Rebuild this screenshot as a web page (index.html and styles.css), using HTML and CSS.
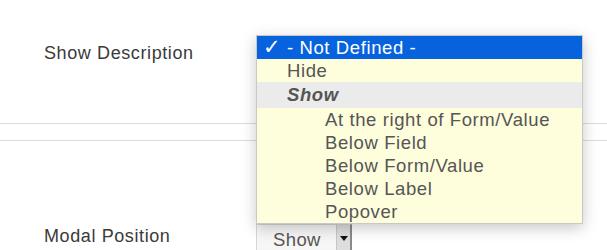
FILE: index.html
```html
<!DOCTYPE html>
<html lang="en">
<head>
  <meta charset="UTF-8">
  <title>Field Options</title>
  <link rel="stylesheet" href="styles.css">
</head>
<body>
  <div class="form">
    <div class="field first">
      <div class="label">Show Description</div>
      <div class="control">
        <ul class="menu">
          <li class="opt selected"><span class="check">✓</span>- Not Defined -</li>
          <li class="opt">Hide</li>
          <li class="group">Show</li>
          <li class="opt sub">At the right of Form/Value</li>
          <li class="opt sub">Below Field</li>
          <li class="opt sub">Below Form/Value</li>
          <li class="opt sub">Below Label</li>
          <li class="opt sub">Popover</li>
        </ul>
      </div>
    </div>

    <div class="divider"></div>

    <div class="field second">
      <div class="label">Modal Position</div>
      <div class="control">
        <div class="select">
          <span class="value">Show</span>
          <span class="arrow"></span>
        </div>
      </div>
    </div>
  </div>
</body>
</html>
```

FILE: styles.css
```css
* {
  box-sizing: border-box;
}

html, body {
  margin: 0;
  padding: 0;
  background: #fff;
  font-family: 'Liberation Sans', Arial, sans-serif;
  color: #3a3a3a;
  overflow: hidden;
}

.form {
  width: 607px;
  height: 250px;
}

.field {
  display: flex;
  align-items: flex-start;
  padding-left: 44px;
}

.field.first {
  height: 123px;
  padding-top: 42px;
}

.field.second {
  padding-top: 84px;
}

.label {
  width: 212px;
  font-size: 18px;
  line-height: 22px;
  letter-spacing: 0.6px;
}

.control {
  position: relative;
}

.divider {
  height: 18px;
  border-top: 1px solid #dcdcdc;
  border-bottom: 1px solid #dcdcdc;
}

/* open popup list */
.menu {
  position: absolute;
  left: 0;
  top: -7px;
  width: 327px;
  margin: 0;
  padding: 0;
  list-style: none;
  background: #fefedd;
  border: 1px solid #c8c8c8;
  box-shadow: 0 4px 14px rgba(0, 0, 0, 0.22);
  z-index: 10;
  font-size: 18.5px;
  letter-spacing: 0.6px;
  color: #555;
}

.opt {
  height: 23px;
  line-height: 23px;
  padding-left: 30px;
  white-space: nowrap;
}

.opt.selected {
  position: relative;
  background: #0663dd;
  color: #fff;
}

.check {
  position: absolute;
  left: 6px;
  top: 0;
  font-family: 'DejaVu Sans', sans-serif;
  font-size: 21px;
  font-weight: bold;
  line-height: 23px;
}

.group {
  height: 26px;
  line-height: 26px;
  padding-left: 30px;
  background: #ebebeb;
  font-weight: bold;
  font-style: italic;
}

.opt.sub {
  padding-left: 68px;
}

/* closed select */
.select {
  display: flex;
  width: 96px;
  height: 34px;
  margin-top: -1px;
  background: #f6f6f6;
  border: 1px solid #d6d6d6;
  border-right: 2px solid #8a8a8a;
  font-size: 18.5px;
  letter-spacing: 0.4px;
  color: #555;
}

.value {
  width: 79px;
  padding-left: 16px;
  line-height: 30px;
}

.arrow {
  flex: 1;
  background: #dedede;
  border-left: 1px solid #c8c8c8;
  position: relative;
}

.arrow::after {
  content: "";
  position: absolute;
  left: 3px;
  top: 11px;
  border-left: 4px solid transparent;
  border-right: 4px solid transparent;
  border-top: 5px solid #111;
}
```
